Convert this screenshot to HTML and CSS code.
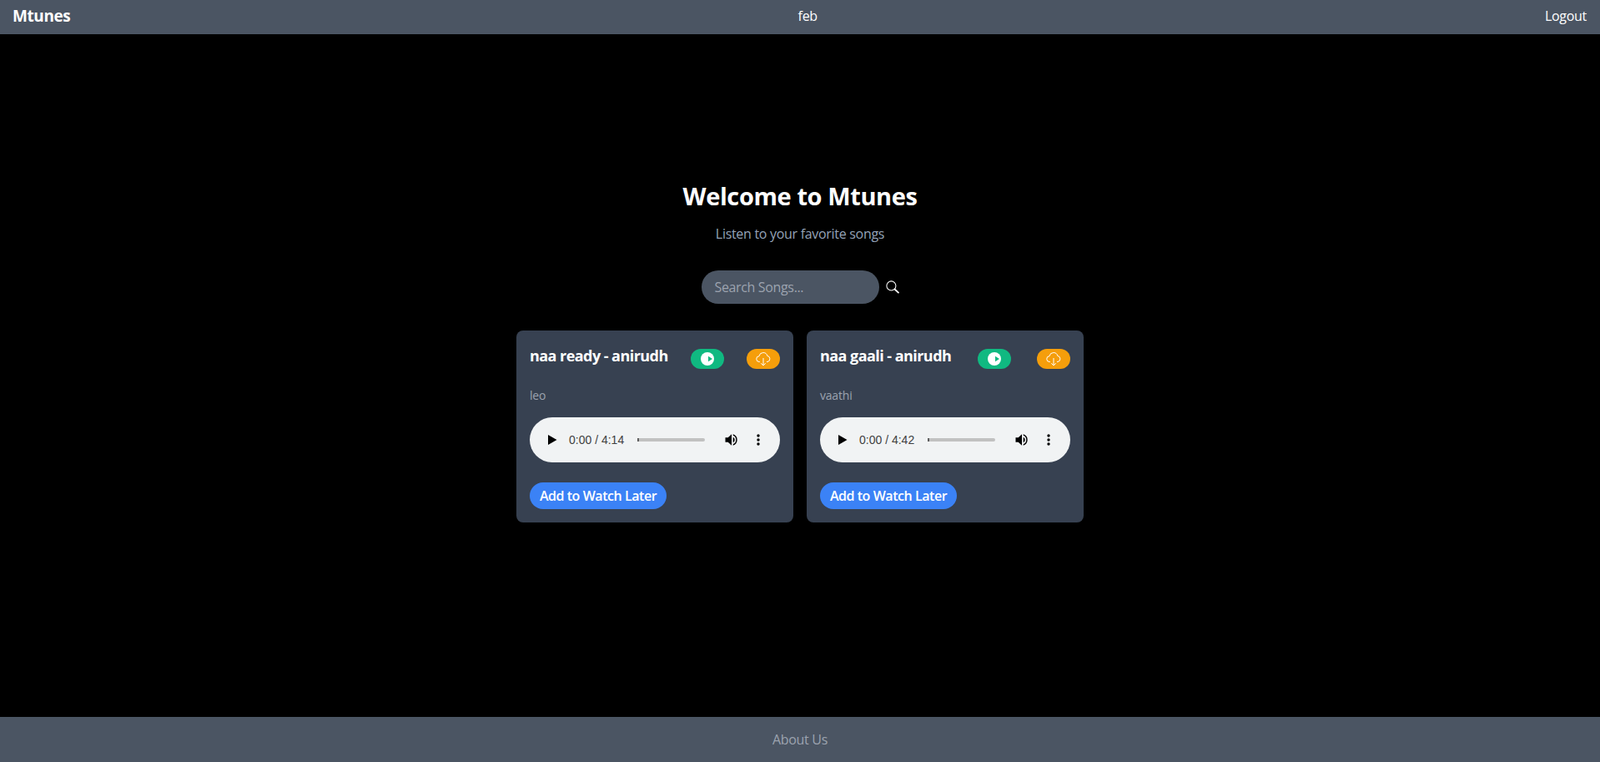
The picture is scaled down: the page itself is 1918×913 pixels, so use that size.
FILE: index.html
```html
<!DOCTYPE html>
<html lang="en">
<head>
    <meta charset="UTF-8">
    <meta name="viewport" content="width=device-width, initial-scale=1.0">
    <title>Mtunes</title>
    <link rel="stylesheet" href="styles.css">
</head>
<body>
    <nav class="navbar">
        <a class="brand" href="#">Mtunes</a>
        <span class="nav-user">feb</span>
        <a class="nav-link" href="#">Logout</a>
    </nav>

    <main class="content">
        <h1 class="title">Welcome to Mtunes</h1>
        <p class="subtitle">Listen to your favorite songs</p>

        <form class="search">
            <input class="search-input" type="text" placeholder="Search Songs...">
            <button class="search-btn" type="button" aria-label="Search">
                <svg width="16" height="16" viewBox="0 0 18 18" fill="none" stroke="#fff">
                    <circle cx="7.2" cy="7.2" r="6.2" stroke-width="1.2"/>
                    <path d="M11.8 11.8l5 4.6" stroke-width="2" stroke-linecap="round"/>
                </svg>
            </button>
        </form>

        <div class="songs">
            <article class="song-card">
                <div class="song-head">
                    <h2 class="song-title">naa ready - anirudh</h2>
                    <button class="pill pill-play" type="button" aria-label="Play">
                        <svg width="16" height="16" viewBox="0 0 16 16"><circle cx="8" cy="8" r="8" fill="#fff"/><path d="M9 4.800l5 3.200-5 3.200z" fill="#10b981"/></svg>
                    </button>
                    <button class="pill pill-download" type="button" aria-label="Download">
                        <svg width="18" height="18" viewBox="0 0 18 18" fill="none" stroke="#fff" stroke-width="1"><path d="M5 12.500H4.300a3.400 3.400 0 0 1-.3-6.800 5 5 0 0 1 9.800-.3 3.600 3.600 0 0 1 .2 7.100H13"/><path d="M9 8v9M6.300 14.200L9 17l2.700-2.800"/></svg>
                    </button>
                </div>
                <p class="song-album">leo</p>
                <div class="player">
                    <svg class="player-play" width="11" height="12" viewBox="0 0 11 12"><path d="M0 0l10.500 6L0 12z"/></svg>
                    <span class="player-time">0:00 / 4:14</span>
                    <div class="player-track"><div class="player-knob"></div></div>
                    <svg class="player-volume" width="16" height="16" viewBox="0 0 15 16"><path d="M0 5.300h3.200L7.500 1.200v13.600L3.200 10.700H0z"/><path d="M9.200 4.700a3.700 3.700 0 0 1 0 6.600z"/><path d="M9.200 1.300a7 7 0 0 1 0 13.400v-1.500a5.600 5.600 0 0 0 0-10.400z"/></svg>
                    <svg class="player-more" width="4" height="14" viewBox="0 0 4 14"><circle cx="2" cy="2" r="1.700"/><circle cx="2" cy="7" r="1.700"/><circle cx="2" cy="12" r="1.700"/></svg>
                </div>
                <button class="later-btn" type="button">Add to Watch Later</button>
            </article>

            <article class="song-card">
                <div class="song-head">
                    <h2 class="song-title">naa gaali - anirudh</h2>
                    <button class="pill pill-play" type="button" aria-label="Play">
                        <svg width="16" height="16" viewBox="0 0 16 16"><circle cx="8" cy="8" r="8" fill="#fff"/><path d="M9 4.800l5 3.200-5 3.200z" fill="#10b981"/></svg>
                    </button>
                    <button class="pill pill-download" type="button" aria-label="Download">
                        <svg width="18" height="18" viewBox="0 0 18 18" fill="none" stroke="#fff" stroke-width="1"><path d="M5 12.500H4.300a3.400 3.400 0 0 1-.3-6.800 5 5 0 0 1 9.800-.3 3.600 3.600 0 0 1 .2 7.100H13"/><path d="M9 8v9M6.300 14.200L9 17l2.700-2.800"/></svg>
                    </button>
                </div>
                <p class="song-album">vaathi</p>
                <div class="player">
                    <svg class="player-play" width="11" height="12" viewBox="0 0 11 12"><path d="M0 0l10.500 6L0 12z"/></svg>
                    <span class="player-time">0:00 / 4:42</span>
                    <div class="player-track"><div class="player-knob"></div></div>
                    <svg class="player-volume" width="16" height="16" viewBox="0 0 15 16"><path d="M0 5.300h3.200L7.500 1.200v13.600L3.200 10.700H0z"/><path d="M9.200 4.700a3.700 3.700 0 0 1 0 6.600z"/><path d="M9.200 1.300a7 7 0 0 1 0 13.400v-1.500a5.600 5.600 0 0 0 0-10.400z"/></svg>
                    <svg class="player-more" width="4" height="14" viewBox="0 0 4 14"><circle cx="2" cy="2" r="1.700"/><circle cx="2" cy="7" r="1.700"/><circle cx="2" cy="12" r="1.700"/></svg>
                </div>
                <button class="later-btn" type="button">Add to Watch Later</button>
            </article>
        </div>
    </main>

    <footer class="footer">
        <a class="footer-link" href="#">About Us</a>
    </footer>
</body>
</html>
```

FILE: styles.css
```css
* {
    box-sizing: border-box;
}

body {
    margin: 0;
    min-height: 913px;
    display: flex;
    flex-direction: column;
    background: #000;
    color: #fff;
    font-family: 'Open Sans', sans-serif;
}

a {
    color: inherit;
    text-decoration: none;
}

button {
    border: none;
    font-family: inherit;
    cursor: pointer;
}

/* Navbar */
.navbar {
    height: 41px;
    padding: 0 16px 3px 15px;
    display: flex;
    justify-content: space-between;
    align-items: center;
    background: #4b5563;
}

.brand {
    font-size: 19px;
    font-weight: 700;
    letter-spacing: -0.4px;
}

.nav-user {
    font-size: 16px;
    letter-spacing: -0.3px;
}

.nav-link {
    font-size: 16px;
    letter-spacing: -0.3px;
}

/* Main */
.content {
    flex: 1;
    padding-top: 173px;
    display: flex;
    flex-direction: column;
    align-items: center;
}

.title {
    margin: 0;
    font-size: 29px;
    line-height: 42px;
    font-weight: 700;
    letter-spacing: -0.4px;
}

.subtitle {
    margin: 12px 0 0;
    font-size: 16px;
    line-height: 24px;
    color: #94a3b8;
    letter-spacing: -0.3px;
}

.search {
    margin: 32px 0 0;
    display: flex;
    align-items: center;
}

.search-input {
    width: 213px;
    height: 40px;
    padding: 0 16px;
    border: none;
    border-radius: 20px;
    background: #4b5563;
    color: #fff;
    font-family: inherit;
    font-size: 16px;
    letter-spacing: -0.35px;
}

.search-input::placeholder {
    color: #9ca3af;
}

.search-btn {
    width: 24px;
    height: 30px;
    padding: 0 0 0 8px;
    background: none;
    display: flex;
    align-items: center;
}

/* Songs */
.songs {
    margin-top: 32px;
    display: flex;
    gap: 16px;
}

.song-card {
    width: 332px;
    height: 230px;
    padding: 16px;
    border-radius: 8px;
    background: #374151;
}

.song-head {
    height: 30px;
    display: flex;
    justify-content: space-between;
}

.song-title {
    margin: 0;
    font-size: 18px;
    line-height: 28px;
    font-weight: 700;
    letter-spacing: -0.55px;
    white-space: nowrap;
}

.pill {
    width: 40px;
    height: 24px;
    margin-top: 6px;
    padding: 0;
    border-radius: 12px;
    display: flex;
    align-items: center;
    justify-content: center;
}

.pill-play {
    background: #10b981;
}

.pill-download {
    background: #f59e0b;
}

.song-album {
    margin: 22px 0 0;
    font-size: 14px;
    line-height: 20px;
    color: #9ca3af;
    letter-spacing: -0.2px;
}

.player {
    width: 300px;
    height: 54px;
    margin-top: 16px;
    padding: 0 21px 0 22px;
    border-radius: 27px;
    background: #f1f3f4;
    display: flex;
    align-items: center;
}

.player-time {
    margin-left: 14px;
    font-family: 'Liberation Sans', sans-serif;
    font-size: 14px;
    color: #3f3f3f;
    white-space: nowrap;
}

.player-track {
    width: 81px;
    height: 4px;
    margin-left: 16px;
    border-radius: 2px;
    background: #c1c1c1;
}

.player-knob {
    width: 2px;
    height: 4px;
    background: #5f5f5f;
}

.player-volume {
    margin-left: 24px;
}

.player-more {
    margin-left: 22px;
}

.later-btn {
    display: block;
    width: 164px;
    height: 32px;
    margin-top: 24px;
    padding: 0;
    border-radius: 16px;
    background: #3b82f6;
    color: #fff;
    font-size: 16px;
    font-weight: 600;
    letter-spacing: -0.45px;
}

/* Footer */
.footer {
    height: 54px;
    display: flex;
    align-items: center;
    justify-content: center;
    background: #4b5563;
}

.footer-link {
    font-size: 16px;
    color: #9ca3af;
    letter-spacing: -0.3px;
}
```
